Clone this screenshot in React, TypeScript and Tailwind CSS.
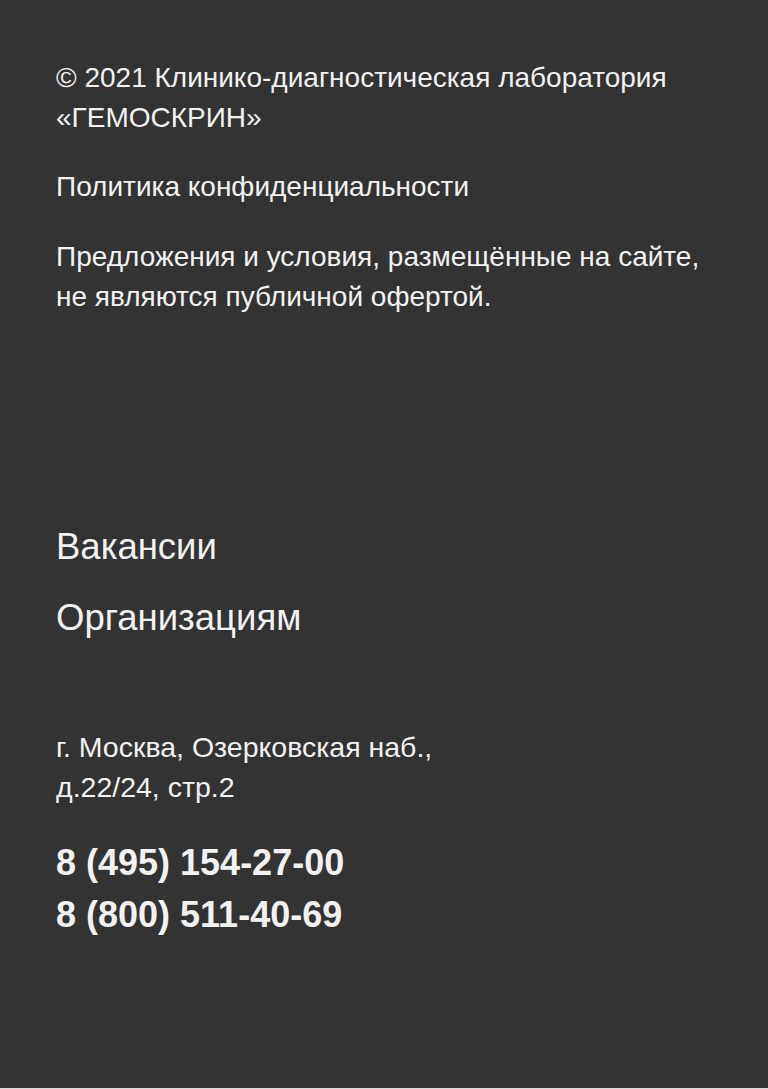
export default function App() {
  return (
    <div className="min-h-[1089px] bg-[#d9d9d9]">
      <footer
        className="bg-[#333333] text-[#f2f2f2] pl-[56px] pr-6 pt-[58px] pb-[147px]"
        style={{ fontFamily: '"Liberation Sans", Arial, sans-serif' }}
      >
        <div className="flex flex-col text-[28px] leading-[40px]">
          <p>
            © 2021 Клинико-диагностическая лаборатория
            <br />
            «ГЕМОСКРИН»
          </p>
          <a className="mt-[29px]">Политика конфиденциальности</a>
          <p className="mt-[30px]">
            Предложения и условия, размещённые на сайте,
            <br />
            не являются публичной офертой.
          </p>
        </div>

        <nav className="mt-[210px] flex flex-col gap-[31px] text-[36.5px] leading-[40px]">
          <a>Вакансии</a>
          <a>Организациям</a>
        </nav>

        <address className="mt-[89px] not-italic text-[28.5px] leading-[40px]">
          г. Москва, Озерковская наб.,
          <br />
          д.22/24, стр.2
        </address>

        <div className="mt-[30px] flex flex-col text-[36px] leading-[52px] font-bold">
          <a>8 (495) 154-27-00</a>
          <a>8 (800) 511-40-69</a>
        </div>
      </footer>
    </div>
  );
}
